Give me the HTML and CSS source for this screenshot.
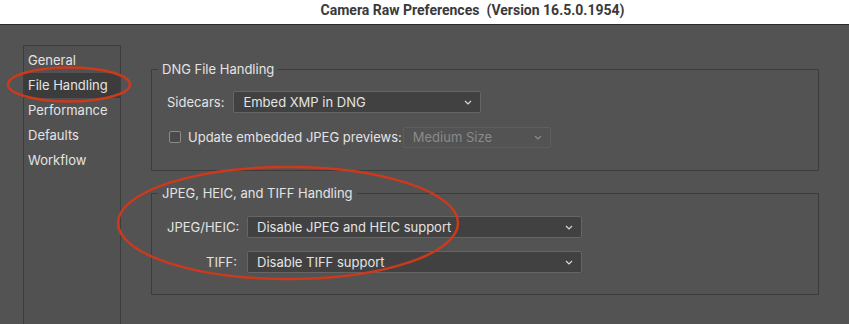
FILE: index.html
```html
<!DOCTYPE html>
<html lang="en">
<head>
  <meta charset="UTF-8">
  <title>Camera Raw Preferences</title>
  <link rel="stylesheet" href="styles.css">
</head>
<body>
  <div class="titlebar">Camera Raw Preferences&nbsp; (Version 16.5.0.1954)</div>

  <div class="window">
    <ul class="sidebar">
      <li>General</li>
      <li class="selected">File Handling</li>
      <li>Performance</li>
      <li>Defaults</li>
      <li>Workflow</li>
    </ul>

    <div class="panel">
      <fieldset class="group dng">
        <legend>DNG File Handling</legend>
        <div class="row">
          <span class="label">Sidecars:</span>
          <div class="select sidecars">
            <span>Embed XMP in DNG</span>
            <svg class="chev" width="8" height="5" viewBox="0 0 8 5"><path d="M1 1l3 3 3-3" fill="none" stroke="#d8d8d8" stroke-width="1.2"/></svg>
          </div>
        </div>
        <div class="row">
          <span class="check"></span>
          <span class="label">Update embedded JPEG previews:</span>
          <div class="select previews disabled">
            <span>Medium Size</span>
            <svg class="chev" width="8" height="5" viewBox="0 0 8 5"><path d="M1 1l3 3 3-3" fill="none" stroke="#8a8a8a" stroke-width="1.2"/></svg>
          </div>
        </div>
      </fieldset>

      <fieldset class="group formats">
        <legend>JPEG, HEIC, and TIFF Handling</legend>
        <div class="row">
          <span class="label right">JPEG/HEIC:</span>
          <div class="select wide">
            <span>Disable JPEG and HEIC support</span>
            <svg class="chev" width="8" height="5" viewBox="0 0 8 5"><path d="M1 1l3 3 3-3" fill="none" stroke="#d8d8d8" stroke-width="1.2"/></svg>
          </div>
        </div>
        <div class="row">
          <span class="label right">TIFF:</span>
          <div class="select wide">
            <span>Disable TIFF support</span>
            <svg class="chev" width="8" height="5" viewBox="0 0 8 5"><path d="M1 1l3 3 3-3" fill="none" stroke="#d8d8d8" stroke-width="1.2"/></svg>
          </div>
        </div>
      </fieldset>
    </div>
  </div>

  <!-- red annotation marks drawn over the dialog -->
  <svg class="marks" width="849" height="324" viewBox="0 0 849 324">
    <ellipse cx="69" cy="84.5" rx="61" ry="17" fill="none" stroke="#cc3a1e" stroke-width="2.5"/>
    <ellipse cx="288" cy="223" rx="170" ry="56" fill="none" stroke="#cc3a1e" stroke-width="2.5"/>
  </svg>
</body>
</html>
```

FILE: styles.css
```css
html {
  box-sizing: border-box;
}

*, *:before, *:after {
  box-sizing: inherit;
}

body {
  margin: 0;
  height: 324px;
  overflow: hidden;
  background: #535353;
  color: #e4e4e4;
  font-family: Inter, "Liberation Sans", sans-serif;
  font-size: 13px;
  position: relative;
}

.titlebar {
  height: 25px;
  background: #fff;
  border-bottom: 1px solid #2b2b2b;
  color: #3a3a3a;
  font-family: Roboto, "Liberation Sans", sans-serif;
  font-weight: bold;
  font-size: 14px;
  line-height: 21px;
  text-align: center;
  padding-left: 96px;
}

.window {
  display: flex;
  padding: 20px 0 0 23px;
}

.sidebar {
  width: 98px;
  height: 279px;
  margin: 0;
  padding: 2px 0 0;
  list-style: none;
  background: #515151;
  border: 1px solid #3d3d3d;
  border-bottom: none;
}

.sidebar li {
  height: 25px;
  line-height: 25px;
  padding-left: 4px;
}

.sidebar .selected {
  background: #3c3c3c;
}

.panel {
  margin-left: 30px;
  padding-top: 16px;
  width: 668px;
}

.group {
  margin: 0;
  padding: 0 0 0 15px;
  border: 1px solid #3c3c3c;
  min-width: 0;
}

.group legend {
  margin-left: -9px;
  padding: 0 4px;
  line-height: 16px;
}

.dng {
  height: 110px;
  padding-top: 14px;
}

.formats {
  margin-top: 14px;
  height: 110px;
  padding-top: 15px;
}

.row {
  display: flex;
  align-items: center;
  height: 22px;
  margin-bottom: 13px;
}

.label {
  margin-right: 9px;
  white-space: nowrap;
}

.label.right {
  width: 70px;
  margin-right: 10px;
  text-align: right;
}

.select {
  display: flex;
  align-items: center;
  justify-content: space-between;
  height: 22px;
  padding: 0 8px 0 9px;
  background: #414141;
  border: 1px solid #656565;
  border-radius: 2px;
}

.select .chev {
  flex: none;
}

.sidecars {
  width: 248px;
}

.previews {
  width: 148px;
  height: 21px;
  margin-left: -8px;
}

.disabled {
  background: #535353;
  border-color: #5e5e5e;
  color: #8a8a8a;
}

.wide {
  width: 335px;
}

.check {
  width: 12px;
  height: 12px;
  margin: 0 7px 0 2px;
  border: 1px solid #8c8c8c;
  border-radius: 2px;
  background: #4a4a4a;
}

.marks {
  position: absolute;
  left: 0;
  top: 0;
  pointer-events: none;
}
```
